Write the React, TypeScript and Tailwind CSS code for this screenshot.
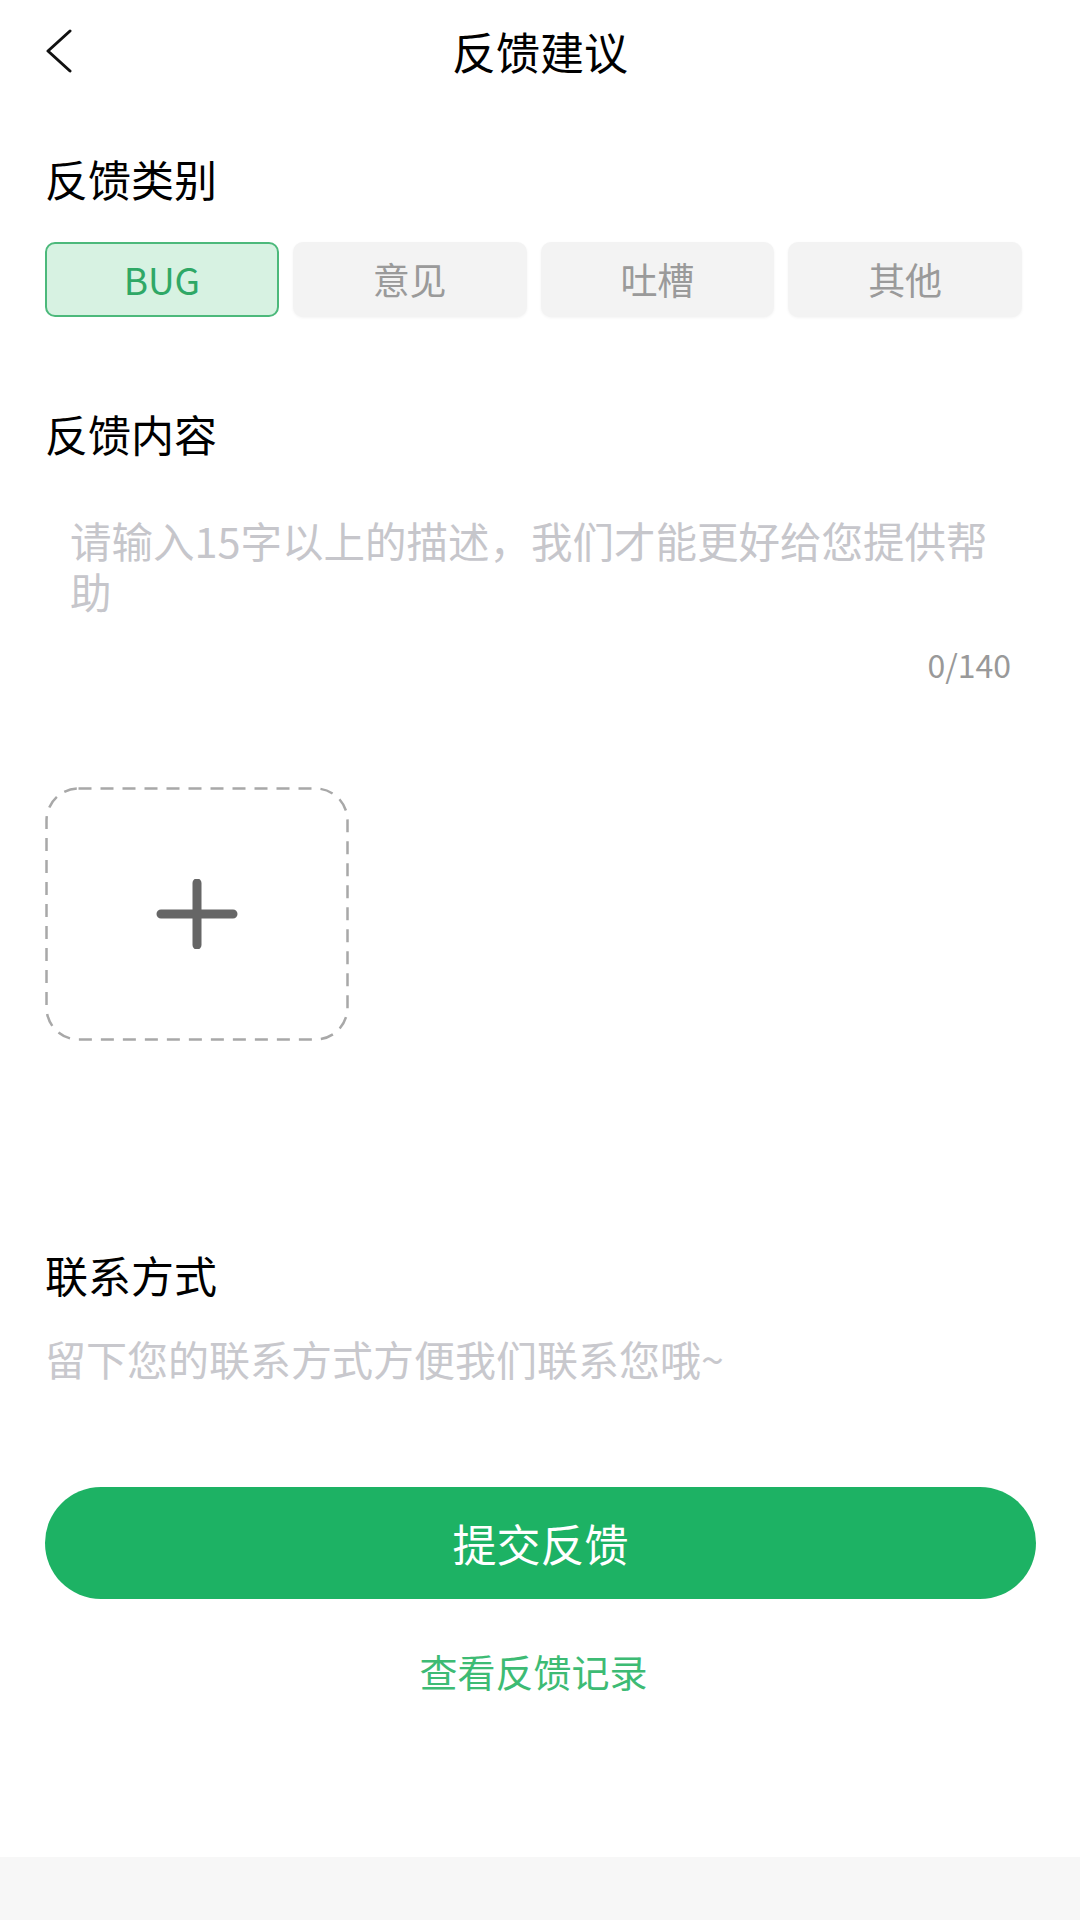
import { useState } from "react";

const categories = ["BUG", "意见", "吐槽", "其他"];

export default function App() {
  const [active, setActive] = useState("BUG");

  return (
    <div
      className="min-h-screen flex flex-col bg-white text-black"
      style={{ fontFamily: '"Noto Sans CJK SC", "Noto Sans", sans-serif' }}
    >
      {/* header */}
      <div className="relative h-[102px] flex items-center justify-center">
        <button className="absolute left-[44px] top-[29px]">
          <svg width="30" height="44" viewBox="0 0 30 44" fill="none">
            <polyline
              points="26,2 4,22 26,42"
              stroke="#111"
              strokeWidth="3"
              strokeLinecap="round"
              strokeLinejoin="round"
            />
          </svg>
        </button>
        <span className="text-[44px] leading-none">反馈建议</span>
      </div>

      <div className="flex flex-col pl-[45px] pr-[58px]">
        <div className="mt-[55px] text-[43px] leading-none">反馈类别</div>

        <div className="mt-[42px] flex gap-[14px]">
          {categories.map((c) => (
            <button
              key={c}
              onClick={() => setActive(c)}
              className={`w-[234px] h-[75px] rounded-[10px] flex items-center justify-center text-[37px] leading-none ${
                active === c
                  ? "bg-[#d7f2e2] border-2 border-[#4cb97b] text-[#2fa866]"
                  : "bg-[#f3f3f3] text-[#9a9a9a] shadow-[0_1px_3px_rgba(0,0,0,0.05)]"
              }`}
            >
              {c}
            </button>
          ))}
        </div>

        <div className="mt-[95px] text-[43px] leading-none">反馈内容</div>

        <div className="mt-[60px] pl-[25px] w-[960px] text-[41.5px] leading-[51px] text-[#c6c6cb]">
          请输入15字以上的描述，我们才能更好给您提供帮助
        </div>

        <div className="mt-[31px] flex justify-end pr-[11px] text-[32px] leading-none text-[#999999]">
          0/140
        </div>

        {/* upload slot */}
        <div className="relative mt-[107px] w-[304px] h-[254px] flex items-center justify-center">
          <svg className="absolute inset-0" width="304" height="254" viewBox="0 0 304 254" fill="none">
            <rect
              x="1.5"
              y="1.5"
              width="301"
              height="251"
              rx="32"
              stroke="#a8a8a8"
              strokeWidth="2.5"
              strokeDasharray="13 9"
            />
          </svg>
          <svg width="82" height="70" viewBox="0 0 82 70">
            <path
              d="M5 35 H77 M41 4 V66"
              stroke="#666666"
              strokeWidth="9"
              strokeLinecap="round"
            />
          </svg>
        </div>

        <div className="mt-[212px] text-[43px] leading-none">联系方式</div>

        <div className="mt-[42px] text-[41px] leading-none text-[#c8c8cd]">
          留下您的联系方式方便我们联系您哦~
        </div>

        <button className="mt-[108px] -mr-[14px] h-[112px] rounded-full bg-[#1db264] text-white text-[44px] leading-none flex items-center justify-center">
          提交反馈
        </button>

        <div className="mt-[53px] flex justify-center text-[38px] leading-none text-[#3dbb74]">
          查看反馈记录
        </div>
      </div>

      <div className="mt-auto h-[63px] bg-[#f7f7f7]" />
    </div>
  );
}
